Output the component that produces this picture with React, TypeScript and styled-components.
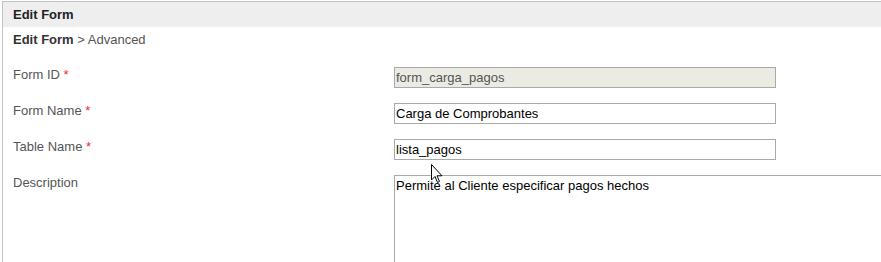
import React from "react";
import styled, { createGlobalStyle } from "styled-components";

const Global = createGlobalStyle`
  html, body { margin: 0; padding: 0; background: #fff; }
  body { font-family: "Liberation Sans", Arial, sans-serif; font-size: 13px; overflow: hidden; }
`;

const Page = styled.div`
  position: relative;
  padding: 1px 0 0 2px;
  height: 261px;
  overflow: hidden;
`;

const Panel = styled.div`
  border-top: 1px solid #c4c4c4;
  border-left: 1px solid #c4c4c4;
  height: 100%;
`;

const Header = styled.div`
  background: #eeeeee;
  height: 25px;
  display: flex;
  align-items: center;
  padding-left: 10px;
  font-weight: bold;
  color: #222;
  font-size: 13px;
`;

const Body = styled.div`
  padding: 0 0 0 10px;
`;

const Crumb = styled.div`
  height: 24px;
  display: flex;
  align-items: center;
  color: #555;
  b { color: #333; }
`;

const Rows = styled.div`
  display: grid;
  grid-template-columns: 381px 1fr;
  row-gap: 15px;
  padding-top: 16px;
`;

const Label = styled.label`
  color: #555;
  line-height: 16px;
`;

const Req = styled.span`
  color: #e8282b;
`;

const Input = styled.input<{ $disabled?: boolean }>`
  box-sizing: border-box;
  width: 382px;
  height: 21px;
  margin: 0;
  border: 1px solid #a9a9a9;
  padding: 1px 1px;
  font-family: "Liberation Sans", Arial, sans-serif;
  font-size: 13px;
  color: ${(p) => (p.$disabled ? "#545454" : "#000")};
  background: ${(p) => (p.$disabled ? "#ebebe4" : "#fff")};
  outline: none;
`;

const Area = styled.textarea`
  box-sizing: border-box;
  width: 520px;
  height: 120px;
  margin: 0;
  border: 1px solid #a9a9a9;
  padding: 2px 1px;
  font-family: "Liberation Sans", Arial, sans-serif;
  font-size: 13px;
  color: #000;
  resize: none;
  outline: none;
`;

const Cursor = styled.svg`
  position: absolute;
  left: 431px;
  top: 164px;
  pointer-events: none;
`;

export default function App() {
  return (
    <>
      <Global />
      <Page>
        <Panel>
          <Header>Edit Form</Header>
          <Body>
            <Crumb>
              <b>Edit Form</b>&nbsp;&gt; Advanced
            </Crumb>
            <Rows>
              <Label>
                Form ID <Req>*</Req>
              </Label>
              <Input $disabled readOnly value="form_carga_pagos" />
              <Label>
                Form Name <Req>*</Req>
              </Label>
              <Input readOnly value="Carga de Comprobantes" />
              <Label>
                Table Name <Req>*</Req>
              </Label>
              <Input readOnly value="lista_pagos" />
              <Label>Description</Label>
              <Area readOnly value="Permite al Cliente especificar pagos hechos" />
            </Rows>
          </Body>
        </Panel>
        <Cursor width="13" height="20" viewBox="0 0 13 20">
          <path d="M0.5 0.5 L0.5 16 L4 12.5 L6.5 18.5 L8.5 17.5 L6 11.8 L11 11.8 Z" fill="#fff" stroke="#000" strokeWidth="1" />
        </Cursor>
      </Page>
    </>
  );
}
